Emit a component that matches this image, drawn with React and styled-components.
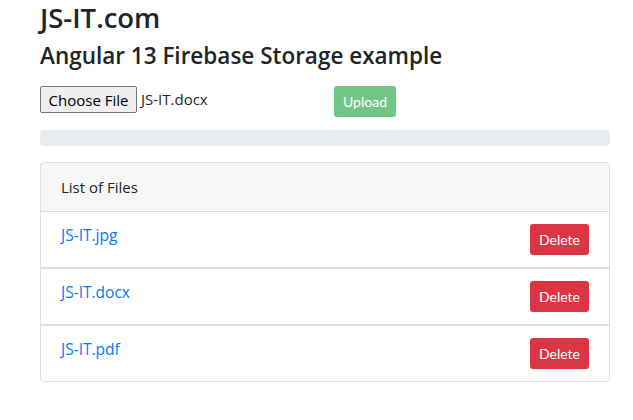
import React from "react";
import styled, { createGlobalStyle } from "styled-components";

const GlobalStyle = createGlobalStyle`
  body {
    margin: 0;
    background: #fff;
    color: #212529;
    font-family: "Open Sans", "Liberation Sans", sans-serif;
    font-size: 16px;
    line-height: 1.5;
  }
`;

const files = [
  { name: "JS-IT.jpg" },
  { name: "JS-IT.docx" },
  { name: "JS-IT.pdf" },
];

const App = () => {
  return (
    <>
      <GlobalStyle />
      <Container>
        <Brand>JS-IT.com</Brand>
        <Title>Angular 13 Firebase Storage example</Title>
        <UploadRow>
          <FilePicker>
            <ChooseButton>Choose File</ChooseButton>
            <FileName>JS-IT.docx</FileName>
          </FilePicker>
          <Button variant="success" disabled>
            Upload
          </Button>
        </UploadRow>
        <Progress />
        <Card>
          <CardHeader>List of Files</CardHeader>
          <List>
            {files.map((file) => (
              <Item key={file.name}>
                <FileLink href="#">{file.name}</FileLink>
                <Button variant="danger">Delete</Button>
              </Item>
            ))}
          </List>
        </Card>
      </Container>
    </>
  );
};

export default App;

const Container = styled.div`
  width: 570px;
  padding: 0 40px;
`;

const Brand = styled.h3`
  margin: 0;
  font-size: 27.5px;
  font-weight: 600;
  line-height: 36px;
`;

const Title = styled.h4`
  margin: 4px 0 14px;
  font-size: 22.5px;
  font-weight: 600;
  line-height: 32px;
`;

const UploadRow = styled.div`
  display: flex;
  align-items: flex-start;
  margin-bottom: 13px;
`;

const FilePicker = styled.div`
  display: flex;
  align-items: center;
  width: 294px;
  height: 27px;
`;

const ChooseButton = styled.button`
  height: 27px;
  width: 97px;
  padding: 0 6px;
  font-family: inherit;
  font-size: 15px;
  color: #000;
  background: #efefef;
  border: 1px solid #767676;
  border-radius: 2px;
`;

const FileName = styled.span`
  margin-left: 4px;
  font-size: 15px;
`;

const Button = styled.button`
  height: 31px;
  padding: 0 8px;
  font-family: "Lato", sans-serif;
  font-size: 14px;
  color: #fff;
  border: 1px solid transparent;
  border-radius: 3px;
  background: ${(p) => (p.variant === "danger" ? "#dc3545" : "#28a745")};
  opacity: ${(p) => (p.disabled ? 0.65 : 1)};
`;

const Progress = styled.div`
  height: 16px;
  border-radius: 4px;
  background: #e9ecef;
  margin-bottom: 16px;
`;

const Card = styled.div`
  border: 1px solid rgba(0, 0, 0, 0.125);
  border-radius: 4px;
  overflow: hidden;
`;

const CardHeader = styled.div`
  padding: 12px 20px;
  background: rgba(0, 0, 0, 0.03);
  border-bottom: 1px solid rgba(0, 0, 0, 0.125);
  font-size: 15px;
  line-height: 24px;
`;

const List = styled.div`
  display: flex;
  flex-direction: column;
`;

const Item = styled.div`
  display: flex;
  justify-content: space-between;
  align-items: center;
  padding: 12px 20px;

  & + & {
    border-top: 2px solid rgba(0, 0, 0, 0.125);
  }
`;

const FileLink = styled.a`
  align-self: flex-start;
  color: #007bff;
  font-size: 15.5px;
  text-decoration: none;
`;
